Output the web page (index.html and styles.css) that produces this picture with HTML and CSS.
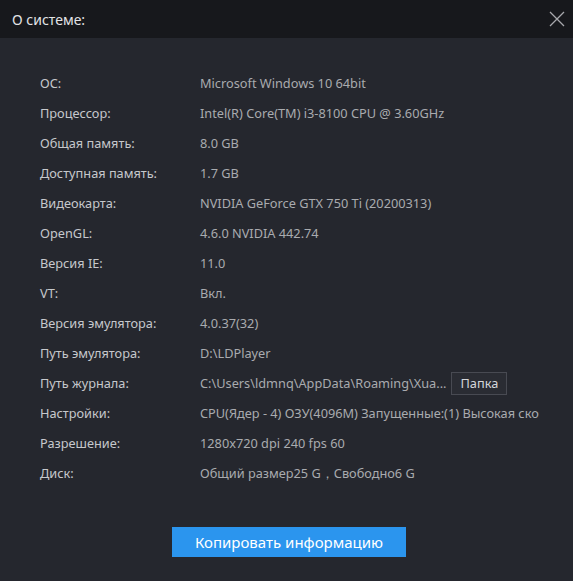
FILE: index.html
```html
<!DOCTYPE html>
<html>
  <head>
    <meta charset="UTF-8">
    <title>О системе</title>
    <link rel="stylesheet" href="styles.css">
  </head>
  <body>
    <div class="dialog">
      <div class="header">
        <span class="title">О системе:</span>
        <svg class="close" width="16" height="16" viewBox="0 0 16 16">
          <path d="M1 1 L15 15 M15 1 L1 15" stroke="#a7a8ac" stroke-width="1.3" fill="none"/>
        </svg>
      </div>

      <div class="content">
        <div class="row"><span class="label">ОС:</span><span class="value">Microsoft Windows 10 64bit</span></div>
        <div class="row"><span class="label">Процессор:</span><span class="value">Intel(R) Core(TM) i3-8100 CPU @ 3.60GHz</span></div>
        <div class="row"><span class="label">Общая память:</span><span class="value">8.0 GB</span></div>
        <div class="row"><span class="label">Доступная память:</span><span class="value">1.7 GB</span></div>
        <div class="row"><span class="label">Видеокарта:</span><span class="value">NVIDIA GeForce GTX 750 Ti (20200313)</span></div>
        <div class="row"><span class="label">OpenGL:</span><span class="value">4.6.0 NVIDIA 442.74</span></div>
        <div class="row"><span class="label">Версия IE:</span><span class="value">11.0</span></div>
        <div class="row"><span class="label">VT:</span><span class="value">Вкл.</span></div>
        <div class="row"><span class="label">Версия эмулятора:</span><span class="value">4.0.37(32)</span></div>
        <div class="row"><span class="label">Путь эмулятора:</span><span class="value">D:\LDPlayer</span></div>
        <div class="row">
          <span class="label">Путь журнала:</span>
          <span class="value">C:\Users\ldmnq\AppData\Roaming\Xua...</span>
          <button class="folder">Папка</button>
        </div>
        <div class="row"><span class="label">Настройки:</span><span class="value">CPU(Ядер - 4) ОЗУ(4096M) Запущенные:(1) Высокая ско</span></div>
        <div class="row"><span class="label">Разрешение:</span><span class="value">1280x720 dpi 240 fps 60</span></div>
        <div class="row"><span class="label">Диск:</span><span class="value">Общий размер25 G，Свободно6 G</span></div>
      </div>

      <div class="actions">
        <button class="copy">Копировать информацию</button>
      </div>
    </div>
  </body>
</html>
```

FILE: styles.css
```css
/* Dialog */
body {
  margin: 0;
  background: #25272e;
  font-family: "Noto Sans", "Open Sans", sans-serif;
}

.dialog {
  width: 573px;
  height: 581px;
  background: #25272e;
  display: flex;
  flex-direction: column;
}

.header {
  height: 38px;
  background: #17181c;
  display: flex;
  align-items: center;
  justify-content: space-between;
  padding: 0 8px 0 12px;
}

.title {
  color: #e2e3e6;
  font-size: 14px;
}

.content {
  padding: 30px 0 0 40px;
}

.row {
  height: 30px;
  display: flex;
  align-items: center;
  font-size: 12.75px;
}

.label {
  width: 160px;
  color: #c6c8cc;
}

.value {
  color: #a9abaf;
}

.folder {
  margin-left: 5px;
  height: 23px;
  padding: 0 8px;
  background: #2a2c33;
  border: 1px solid #484a52;
  color: #d4d6da;
  font-family: inherit;
  font-size: 12.75px;
}

.actions {
  display: flex;
  justify-content: center;
  padding-top: 39px;
  padding-left: 5px;
}

.copy {
  width: 234px;
  height: 30px;
  background: #2b95ee;
  border: none;
  color: #ffffff;
  font-family: inherit;
  font-size: 15px;
}
```
